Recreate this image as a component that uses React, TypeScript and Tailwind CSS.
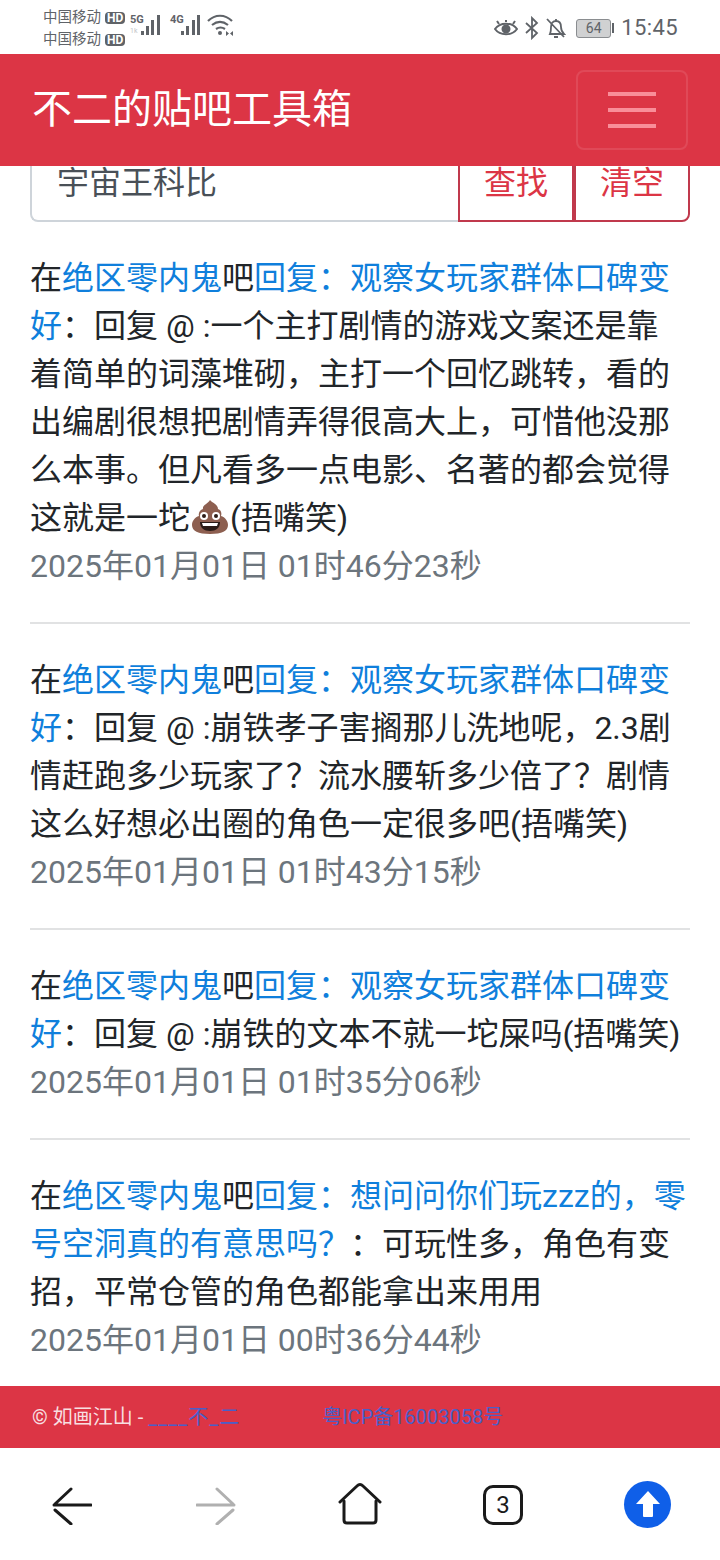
const font = "[font-family:Roboto,'Noto_Sans_CJK_SC',sans-serif]";

function Poop() {
  return (
    <svg viewBox="0 0 40 36" className="inline-block w-[40px] h-[36px] align-[-6px]">
      <path d="M20 1c2 3 8 4 8 9 3 1 4 4 3 7 4 1 7 5 7 9 0 6-6 9-18 9S2 32 2 26c0-4 3-8 7-9-1-3 1-6 4-7-1-4 5-5 7-9z" fill="#8d5f50" />
      <circle cx="14" cy="17" r="4" fill="#fff" />
      <circle cx="26" cy="17" r="4" fill="#fff" />
      <circle cx="14" cy="17" r="2" fill="#2b1c17" />
      <circle cx="26" cy="17" r="2" fill="#2b1c17" />
      <path d="M10 23h20c0 6-4 9-10 9s-10-3-10-9z" fill="#2b1c17" />
      <path d="M12 24h16l-1 3H13z" fill="#fff" />
    </svg>
  );
}

function Item({ title, children, date, last }: { title: string; children: React.ReactNode; date: string; last?: boolean }) {
  return (
    <div className={last ? "" : "border-b-2 border-[#e1e2e3] pb-[32px] mb-[32px]"}>
      <div className="text-[32px] leading-[48px] text-[#212529]">
        在<span className="text-[#0f7fdc]">绝区零内鬼</span>吧<span className="text-[#0f7fdc]">回复：{title}</span>{children}
      </div>
      <div className="text-[32px] leading-[48px] text-[#6c757d]">{date}</div>
    </div>
  );
}

function StatusBar() {
  return (
    <div className="h-[54px] shrink-0 bg-white flex items-center pl-[43px] pr-[42px] text-[#5f6368]">
      <div className="flex flex-col text-[14.5px] leading-[22px] mt-[4px]">
        {[0, 1].map((i) => (
          <div key={i} className="flex items-center gap-[4px]">
            <span>中国移动</span>
            <span className="bg-[#5f6368] text-white rounded-[4px] text-[12px] leading-[12px] px-[2px] font-bold">HD</span>
          </div>
        ))}
      </div>
      <svg viewBox="0 0 110 30" className="w-[110px] h-[30px] ml-[4px] mt-[2px]" fill="#5f6368">
        <text x="1" y="10" fontSize="11" fontWeight="700" fontFamily="Roboto">5G</text>
        <text x="1" y="20" fontSize="7" fill="#c4c6c8" fontFamily="Roboto">1k</text>
        <rect x="12" y="18" width="3" height="4" />
        <rect x="17" y="13" width="3" height="9" />
        <rect x="22" y="7" width="3" height="15" />
        <rect x="28" y="2" width="3" height="20" />
        <text x="41" y="10" fontSize="11" fontWeight="700" fontFamily="Roboto">4G</text>
        <rect x="52" y="18" width="3" height="4" />
        <rect x="57" y="13" width="3" height="9" />
        <rect x="63" y="7" width="3" height="15" />
        <rect x="68" y="2" width="3" height="20" />
        <path d="M79 8c7-7 17-7 24 0M83 12c5-4 11-4 16 0M87 16c3-2 6-2 9 0" fill="none" stroke="#5f6368" strokeWidth="2.2" />
        <circle cx="91" cy="20" r="2" />
        <path d="M97 18l3 2.500-3 2.500zM104 18l-3 2.500 3 2.500z" />
      </svg>
      <div className="flex-1" />
      <svg viewBox="0 0 24 24" className="w-[24px] h-[24px] mt-[2px]" fill="none" stroke="#5f6368" strokeWidth="2">
        <path d="M1 13c5-7 17-7 22 0-5 7-17 7-22 0z" />
        <circle cx="12" cy="13" r="3.500" fill="#5f6368" />
        <path d="M5 8L3 5M19 8l2-3M12 6V4" />
      </svg>
      <svg viewBox="0 0 14 24" className="w-[14px] h-[24px] ml-[7px] mt-[2px]" fill="none" stroke="#5f6368" strokeWidth="1.800">
        <path d="M1 7l11 10-5 5V2l5 5L1 17" />
      </svg>
      <svg viewBox="0 0 20 24" className="w-[20px] h-[24px] ml-[7px] mt-[2px]" fill="none" stroke="#5f6368" strokeWidth="1.800">
        <path d="M4 18c1-2 1-4 1-7 0-4 2-6 5-6s5 2 5 6c0 3 1 5 3 7zM8 21h4M10 5V3M1 3l17 18" />
      </svg>
      <div className="ml-[10px] mt-[2px] w-[35px] h-[19px] rounded-[3px] border border-[#8a8d90] bg-[#d0d1d2] text-[14px] leading-[17px] text-center text-[#5f6368]">64</div>
      <div className="w-[2px] h-[10px] bg-[#5f6368] ml-[1px] mt-[2px]" />
      <div className="text-[22px] leading-[26px] ml-[7px] mt-[2px] text-[#5f6368] tracking-[0.4px]">15:45</div>
    </div>
  );
}

export default function App() {
  return (
    <div className={`${font} w-[720px] h-[1560px] flex flex-col overflow-hidden bg-white`}>
      <StatusBar />

      {/* Navbar */}
      <div className="h-[112px] shrink-0 bg-[#dc3545] flex items-center justify-between pl-[32px] pr-[32px] relative z-10">
        <div className="text-[40px] leading-[48px] text-white">不二的贴吧工具箱</div>
        <div className="w-[112px] h-[80px] rounded-[8px] border-2 border-white/10 flex flex-col items-center justify-center gap-[12px]">
          <div className="w-[48px] h-[4px] bg-[#f98e99]" />
          <div className="w-[48px] h-[4px] bg-[#f98e99]" />
          <div className="w-[48px] h-[4px] bg-[#f98e99]" />
        </div>
      </div>

      {/* Content scrolled under the navbar */}
      <div className="flex-1 overflow-hidden px-[30px]">
        <div className="flex h-[96px] -mt-[40px] text-[32px]">
          <div className="flex-1 flex items-center pl-[25px] pt-[18px] border-2 border-r-0 border-[#ced4da] rounded-l-[8px] text-[#495057]">宇宙王科比</div>
          <div className="w-[116px] flex items-center justify-center pt-[18px] border-2 border-[#c0394c] text-[#dc3545]">查找</div>
          <div className="w-[116px] flex items-center justify-center pt-[18px] border-2 border-[#c0394c] rounded-r-[8px] text-[#dc3545]">清空</div>
        </div>

        <div className="pt-[32px]">
          <Item title="观察女玩家群体口碑变好" date="2025年01月01日 01时46分23秒">
            ：回复 @ :一个主打剧情的游戏文案还是靠着简单的词藻堆砌，主打一个回忆跳转，看的出编剧很想把剧情弄得很高大上，可惜他没那么本事。但凡看多一点电影、名著的都会觉得这就是一坨<Poop />(捂嘴笑)
          </Item>
          <Item title="观察女玩家群体口碑变好" date="2025年01月01日 01时43分15秒">
            ：回复 @ :崩铁孝子害搁那儿洗地呢，2.3剧情赶跑多少玩家了？流水腰斩多少倍了？剧情这么好想必出圈的角色一定很多吧(捂嘴笑)
          </Item>
          <Item title="观察女玩家群体口碑变好" date="2025年01月01日 01时35分06秒">
            ：回复 @ :崩铁的文本不就一坨屎吗(捂嘴笑)
          </Item>
          <Item title="想问问你们玩zzz的，零号空洞真的有意思吗？" date="2025年01月01日 00时36分44秒" last>
            ：可玩性多，角色有变招，平常仓管的角色都能拿出来用用
          </Item>
        </div>
      </div>

      {/* Footer */}
      <div className="h-[62px] shrink-0 bg-[#dc3545] flex items-center pl-[32px] text-[20px] text-[#f8dfe1]">
        <span>© 如画江山 - </span>
        <span className="text-[#4a5fc8] ml-[5px] w-[174px] tracking-[1px]">____不_二</span>
        <span className="text-[#4a5fc8]">粤ICP备16003058号</span>
      </div>

      {/* Browser bar */}
      <div className="h-[112px] shrink-0 bg-white flex items-center pl-[52px]">
        <svg viewBox="0 0 40 38" className="w-[40px] h-[38px] mt-[3px]" fill="none" stroke="#1a1a1a" strokeWidth="3" strokeLinecap="round">
          <path d="M39 18H2M19 2L3 17M3 23l16 14" />
        </svg>
        <svg viewBox="0 0 40 38" className="w-[40px] h-[38px] mt-[3px] ml-[104px]" fill="none" stroke="#b0b0b0" strokeWidth="3" strokeLinecap="round">
          <path d="M1 18h37M21 2l16 15M37 23L21 37" />
        </svg>
        <svg viewBox="0 0 44 42" className="w-[44px] h-[42px] ml-[102px]" fill="none" stroke="#1a1a1a" strokeWidth="3" strokeLinecap="round" strokeLinejoin="round">
          <path d="M2 19L19 3q3-3 6 0l17 16" />
          <path d="M6 18v19q0 3 3 3h26q3 0 3-3V18" />
        </svg>
        <div className="w-[40px] h-[40px] ml-[101px] mt-[2px] rounded-[10px] border-[3px] border-[#1a1a1a] flex items-center justify-center text-[24px] text-[#1a1a1a]">3</div>
        <div className="w-[47px] h-[47px] ml-[101px] rounded-full bg-[#0f5fe8] flex items-center justify-center">
          <svg viewBox="0 0 26 28" className="w-[26px] h-[28px]" fill="#fff">
            <path d="M13 1L25 14h-7v12q0 1-1 1H9q-1 0-1-1V14H1z" />
          </svg>
        </div>
      </div>
    </div>
  );
}
